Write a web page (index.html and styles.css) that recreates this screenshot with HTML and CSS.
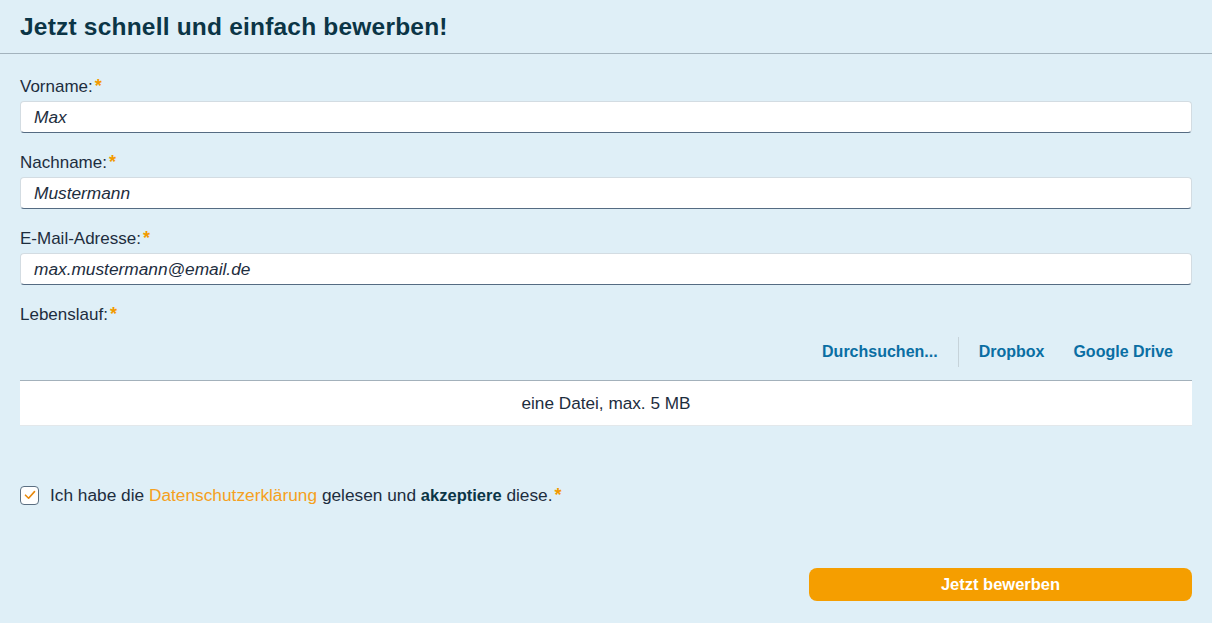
FILE: index.html
```
<!DOCTYPE html>
<html lang="de">
<head>
<meta charset="utf-8">
<link rel="stylesheet" href="styles.css">
</head>
<body>
<div class="page">
  <header class="head"><h1 class="title">Jetzt schnell und einfach bewerben!</h1></header>
  <form class="form">
    <div class="field">
      <label class="label">Vorname:<span class="req">*</span></label>
      <div class="input">Max</div>
    </div>
    <div class="field">
      <label class="label">Nachname:<span class="req">*</span></label>
      <div class="input">Mustermann</div>
    </div>
    <div class="field">
      <label class="label">E-Mail-Adresse:<span class="req">*</span></label>
      <div class="input">max.mustermann@email.de</div>
    </div>
    <div class="field">
      <label class="label">Lebenslauf:<span class="req">*</span></label>
      <div class="sources">
        <a class="src">Durchsuchen...</a>
        <span class="sep"></span>
        <a class="src">Dropbox</a>
        <a class="src">Google Drive</a>
      </div>
      <div class="drop">eine Datei, max. 5 MB</div>
    </div>
    <div class="consent">
      <span class="box"><svg width="12" height="10" viewBox="0 0 12 10"><path d="M1.5 5.2 L4.6 8.2 L10.5 1.6" fill="none" stroke="#e8890c" stroke-width="1.6" stroke-linecap="round" stroke-linejoin="round"/></svg></span>
      <span class="ctext">Ich habe die <a class="olink">Datenschutzerklärung</a> gelesen und <b>akzeptiere</b> diese.<span class="req">*</span></span>
    </div>
    <div class="actions"><button type="button" class="btn">Jetzt bewerben</button></div>
  </form>
</div>
</body>
</html>
```
FILE: styles.css
```
html, body { margin: 0; padding: 0; }
body {
  background: #dfeff7;
  font-family: "Liberation Sans", Arial, sans-serif;
  color: #1d2d3e;
  width: 1212px;
  height: 623px;
  overflow: hidden;
}
.head {
  height: 53px;
  border-bottom: 1px solid #a3b3bd;
  padding: 0 20px;
  display: flex;
  align-items: center;
}
.title {
  margin: 0;
  font-size: 24.5px;
  font-weight: bold;
  color: #0b3546;
  letter-spacing: 0.2px;
}
.form {
  padding: 0 20px;
  display: flex;
  flex-direction: column;
}
.field { display: flex; flex-direction: column; }
.label {
  font-size: 17px;
  height: 18px;
  line-height: 18px;
  padding-top: 2px;
  margin-top: 18px;
  margin-bottom: 6px;
  color: #1d2d3e;
}
.field:first-child .label { margin-top: 21px; }
.req { color: #f29a00; font-weight: bold; margin-left: 2px; font-size: 18px; }
.input {
  height: 30px;
  background: #fff;
  border: 1px solid #d3dce2;
  border-bottom: 1px solid #556b82;
  border-radius: 4px;
  padding: 0 13px;
  font-size: 17.3px;
  font-style: italic;
  line-height: 30px;
  color: #1d2d3e;
}
.sources {
  display: flex;
  justify-content: flex-end;
  align-items: center;
  height: 32px;
  margin-top: 7px;
  padding-right: 19px;
}
.src {
  color: #0a6ea3;
  font-size: 16px;
  font-weight: bold;
}
.src + .src { margin-left: 29px; }
.sep {
  width: 1px;
  height: 30px;
  background: #c6d3da;
  margin: 0 20px;
}
.drop {
  margin-top: 12px;
  height: 44px;
  background: #fff;
  border-top: 1px solid #a3b1bb;
  border-bottom: 1px solid #e3e8eb;
  display: flex;
  align-items: center;
  justify-content: center;
  font-size: 17.2px;
  color: #1d2d3e;
}
.consent {
  display: flex;
  align-items: center;
  margin-top: 58px;
  height: 22px;
}
.box {
  width: 17px;
  height: 17px;
  border: 1px solid #5b6f82;
  border-radius: 4px;
  background: #fff;
  display: flex;
  align-items: center;
  justify-content: center;
}
.ctext { margin-left: 11px; font-size: 17.3px; }
.ctext b { color: #0b3546; font-size: 16.5px; }
.olink { color: #f5a020; }
.actions {
  display: flex;
  justify-content: flex-end;
  margin-top: 62px;
}
.btn {
  width: 383px;
  height: 33px;
  border: none;
  border-radius: 8px;
  background: #f59e00;
  color: #fff;
  font-family: "Liberation Sans", Arial, sans-serif;
  font-weight: bold;
  font-size: 16.5px;
}
```
